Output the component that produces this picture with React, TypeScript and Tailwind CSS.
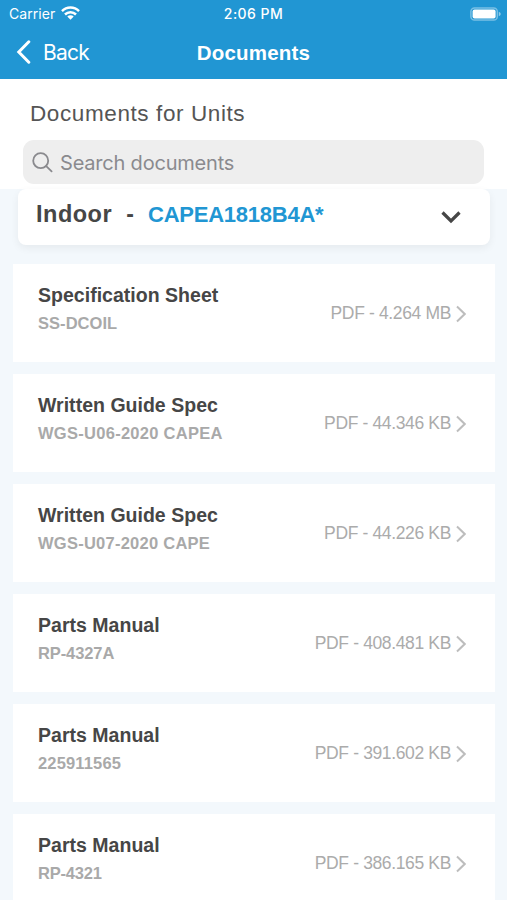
import React, { useState } from 'react';

interface DocumentItem {
    id: number;
    title: string;
    code: string;
    size: string;
    codeClass?: string;
}

const documents: DocumentItem[] = [
    { id: 1, title: 'Specification Sheet', code: 'SS-DCOIL', size: '4.264 MB' },
    { id: 2, title: 'Written Guide Spec', code: 'WGS-U06-2020 CAPEA', size: '44.346 KB', codeClass: 'tracking-[0.28px]' },
    { id: 3, title: 'Written Guide Spec', code: 'WGS-U07-2020 CAPE', size: '44.226 KB', codeClass: 'tracking-[0.25px]' },
    { id: 4, title: 'Parts Manual', code: 'RP-4327A', size: '408.481 KB', codeClass: 'tracking-[-0.1px]' },
    { id: 5, title: 'Parts Manual', code: '225911565', size: '391.602 KB', codeClass: 'tracking-[0.15px]' },
    { id: 6, title: 'Parts Manual', code: 'RP-4321', size: '386.165 KB', codeClass: 'tracking-[-0.2px]' },
];

const StatusBar: React.FC = () => (
    <div className="grid grid-cols-3 items-center h-7 pl-[9px] pr-[6px] text-[14px] leading-none font-['Inter',sans-serif]">
        <div className="flex items-center gap-[6px]">
            <span className="tracking-[0.05px]">Carrier</span>
            <svg className="-mt-[2px]" width="19" height="14" viewBox="0 0 19 14" fill="none" stroke="currentColor" strokeWidth="2.5">
                <path d="M1 5.1a12.1 12.1 0 0 1 17 0" />
                <path d="M4 8.5a7.8 7.8 0 0 1 11 0" />
                <path d="M9.5 13.8 6.3 10.6a4.6 4.6 0 0 1 6.4 0z" fill="currentColor" stroke="none" />
            </svg>
        </div>
        <span className="-ml-[3px] text-center font-medium whitespace-nowrap tracking-[0.45px]">2:06 PM</span>
        <svg className="justify-self-end -mt-[1px]" width="31" height="14" viewBox="0 0 31 14" fill="none">
            <rect x="0.9" y="0.9" width="26.4" height="12.2" rx="3.6" stroke="white" strokeOpacity="0.4" strokeWidth="1.5" />
            <rect x="2.6" y="2.6" width="23" height="8.8" rx="2" fill="white" />
            <path d="M28.8 4.8c1.3.5 1.9 1.2 1.9 2.2s-.6 1.7-1.9 2.2z" fill="white" fillOpacity="0.5" />
        </svg>
    </div>
);

const DocumentCard: React.FC<{ item: DocumentItem }> = ({ item }) => (
    <li className="flex items-center justify-between h-[98px] shrink-0 bg-white pl-[25px] pr-[29px]">
        <div className="pb-2 font-bold">
            <h2 className="text-[19.5px] leading-7 text-[#464646] tracking-[0.02px]">{item.title}</h2>
            <p className={`text-[16.5px] leading-7 text-[#a9a9a9] ${item.codeClass || 'tracking-[0.05px]'}`}>{item.code}</p>
        </div>
        <div className="flex items-center gap-[5px] text-[#ababab]">
            <span className="pb-px text-[17.5px] leading-6 tracking-[-0.36px]">PDF - {item.size}</span>
            <svg className="mt-[2px]" width="10" height="18" viewBox="0 0 10 18" fill="none" stroke="#bdbdbd" strokeWidth="2">
                <path d="M1 1.5 8.7 9 1 16.5" />
            </svg>
        </div>
    </li>
);

const App: React.FC = () => {
    const [search, setSearch] = useState('');

    return (
        <div className="flex flex-col h-[900px] w-full overflow-hidden bg-[#f3f8fc] font-['Liberation_Sans',Arial,sans-serif]">
            <header className="h-[79px] shrink-0 bg-[#2196d3] text-white">
                <StatusBar />
                <div className="grid grid-cols-[1fr_auto_1fr] items-center h-12 px-4">
                    <button type="button" className="flex items-center gap-[12px] text-[21px] font-['Inter',sans-serif]">
                        <svg width="15" height="24" viewBox="0 0 15 24" fill="none" stroke="currentColor" strokeWidth="3" strokeLinecap="round">
                            <path d="M12.8 1.8 2.8 12l10 10.2" />
                        </svg>
                        <span className="pt-[2px] tracking-[-0.8px]">Back</span>
                    </button>
                    <h1 className="pt-[3px] text-[20.5px] font-bold tracking-[0.2px]">Documents</h1>
                </div>
            </header>

            <section className="h-[110px] shrink-0 bg-white px-[23px] pt-5">
                <p className="pl-[7px] text-[22.5px] leading-[30px] text-[#555] tracking-[0.6px]">Documents for Units</p>
                <label className="flex items-center gap-[7px] h-[44px] mt-[11px] px-[9px] rounded-[11px] bg-[#eeeeee] text-[#8a8a8e]">
                    <svg width="21" height="21" viewBox="0 0 21 21" fill="none" stroke="currentColor" strokeWidth="1.8" strokeLinecap="round">
                        <circle cx="8.7" cy="8.7" r="7.5" />
                        <path d="m14.2 14.2 5.4 5.2" />
                    </svg>
                    <input
                        value={search}
                        onChange={e => setSearch(e.target.value)}
                        placeholder="Search documents"
                        className="flex-1 pt-[2px] bg-transparent outline-none text-[20px] tracking-[-0.2px] placeholder:text-[#8a8a8e] font-['Inter',sans-serif]"
                    />
                </label>
            </section>

            <button type="button" className="flex items-center h-[56px] shrink-0 ml-[18px] mr-[17px] pl-[18px] pr-[29px] pb-[5px] rounded-lg bg-white font-bold shadow-[0_3px_8px_rgba(0,0,0,0.06)]">
                <span className="text-[23.5px] text-[#464646] tracking-[0.5px]">Indoor</span>
                <span className="w-[36px] text-center text-[23px] text-[#464646]">-</span>
                <span className="text-[22px] text-[#2196d3] tracking-[-0.25px]">CAPEA1818B4A*</span>
                <svg className="ml-auto mt-[5px]" width="20" height="14" viewBox="0 0 20 14" fill="none" stroke="#464646" strokeWidth="3.2">
                    <path d="m1.5 2.5 8.5 8.5 8.5-8.5" />
                </svg>
            </button>

            <ul className="flex flex-col gap-3 mt-[19px] ml-[13px] mr-[12px]">
                {documents.map(item => (
                    <DocumentCard key={item.id} item={item} />
                ))}
            </ul>
        </div>
    );
};

export default App;
